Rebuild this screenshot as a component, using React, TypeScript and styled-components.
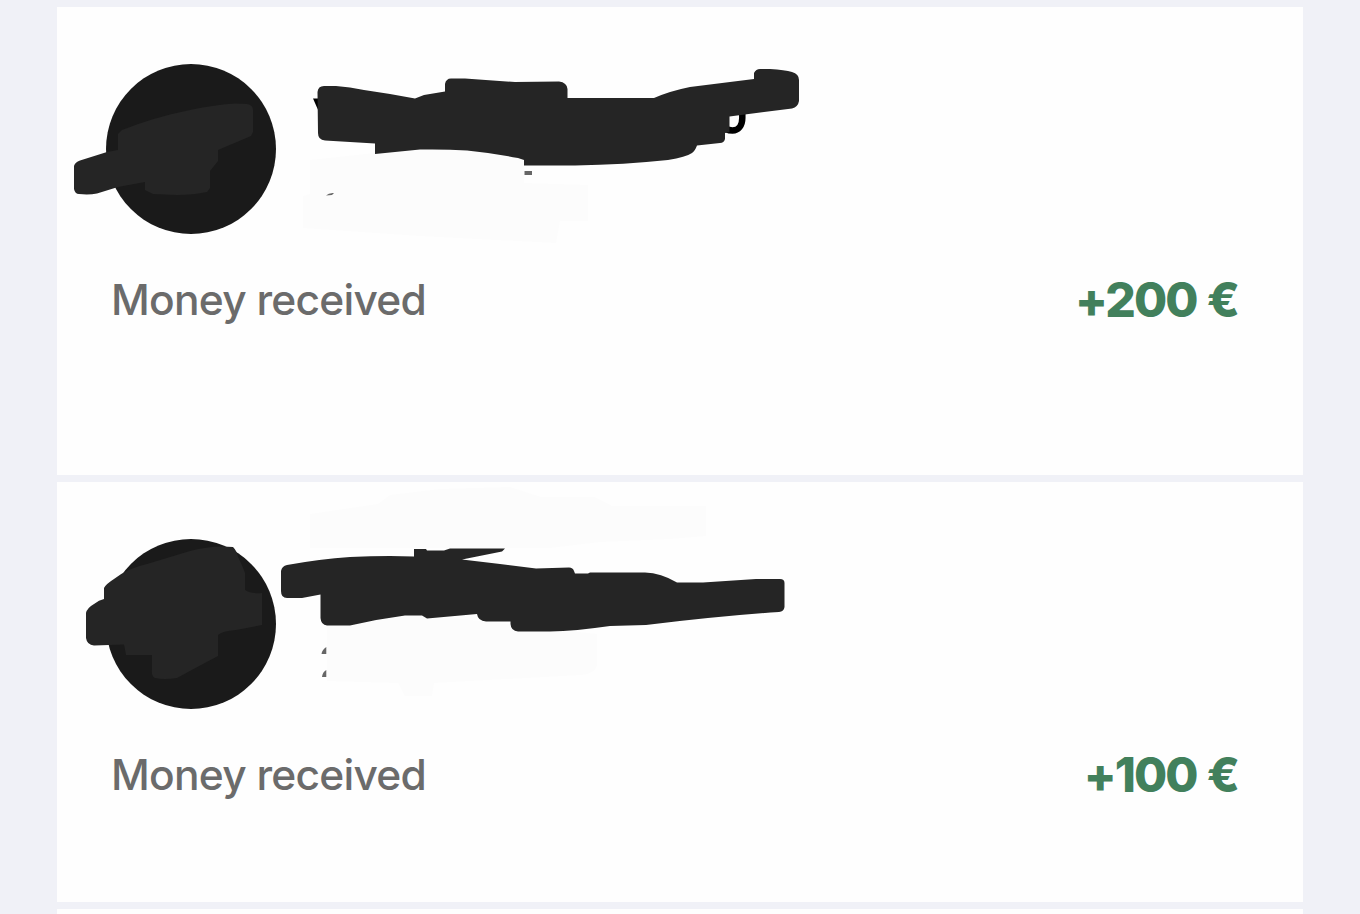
import React from "react";
import styled, { createGlobalStyle } from "styled-components";

const GlobalStyle = createGlobalStyle`
  body {
    margin: 0;
    background: #f0f1f7;
    overflow: hidden;
  }
`;

const List = styled.main`
  box-sizing: border-box;
  height: 914px;
  padding: 7px 57px 0;
  display: flex;
  flex-direction: column;
  gap: 7px;
  overflow: hidden;
  background: #f0f1f7;
  font-family: Inter, "Liberation Sans", sans-serif;
`;

const Card = styled.article<{ $height: number }>`
  position: relative;
  box-sizing: border-box;
  flex: none;
  height: ${(p) => p.$height}px;
  padding: 57px 64px 0 49px;
  background: #fefefe;
`;

const Avatar = styled.div`
  width: 170px;
  height: 170px;
  border-radius: 50%;
  background: #1a1a1a;
`;

const Row = styled.div`
  display: flex;
  justify-content: space-between;
  align-items: flex-start;
  margin-top: 36px;
  padding-left: 5px;
  line-height: 60px;
  white-space: nowrap;
`;

const Label = styled.span`
  font-size: 42.5px;
  font-weight: 500;
  letter-spacing: -0.75px;
  color: #6b6b6b;
`;

const Amount = styled.span`
  font-size: 48px;
  font-weight: 800;
  letter-spacing: -1.9px;
  word-spacing: 1.5px;
  margin-right: 1px;
  color: #42805c;
`;

const Marker = styled.svg`
  position: absolute;
  top: 0;
  left: 0;
`;

const INK = "#252525";
const PALE = "#fcfcfc";

function FirstMarks() {
  return (
    <Marker width="760" height="240" viewBox="57 7 760 240" aria-hidden="true">
      <path fill={PALE} d="M310 160L375 153L440 149L500 153L524 158V183L588 185V221H560L556 243L420 236L303 228V196L310 194Z" />
      <path fill="#000" d="M313 98.500H318L319 112Z" />
      <path fill="none" stroke="#000" strokeWidth="6.500" d="M742.300 108V118C742.300 126 738 130.500 732.500 130.500C730 130.500 728 130 726 129" />
      <path fill="#666" d="M326 195.500Q329 192.500 334 193L332 195Z" />
      <path fill="#666" d="M524.500 171H532V175H524.500Z" />
      <path
        fill={INK}
        d="M317.500 92Q318 86 324 86H336Q350 87 364 90L390 94L415 98.500L424 95L445 91.500V84Q446 78.500 451 78.500H465L515 82L559 81.500Q567 82.500 567.500 89V98H654Q670 91 690 87L754 79V73Q756 69 760 69H770Q785 70 792 72Q799 74 799 80V101Q798 107 792 108.500L729.500 116.500V132L725 133V139Q724 143 720 143L697 145.500Q695 151 692 153Q686 157 668 160Q625 164.500 575 165.500H524V160L518 158Q492 153 467 150.500Q445 149 420 149.500L375 154V143.500L325 140.500Q318 140 318 133Z"
      />
      <path
        fill={INK}
        d="M74 166Q75 162 80 160.500L107 152L118 150V134L122 130Q155 117 190 110Q216 104.500 235 103.500L247 104Q253 105 253 110V132L251 136L218 150V161L210 171V188L207 192Q193 195 177 195L153 194L145 190V182L118 187L97 193.500Q89 195 79 194Q75 194 74 189Z"
      />
    </Marker>
  );
}

function SecondMarks() {
  return (
    <Marker width="760" height="240" viewBox="57 482 760 240" aria-hidden="true">
      <path fill={PALE} d="M310 514L378 504L390 495L440 489L510 487L541 497H595L612 506H706V536L670 539L600 542L550 548H310Z" />
      <path fill={PALE} d="M327 625L420 615L490 622L597 634V665Q595 674 580 675L434 683L432 696H405L398 683L327 681Z" />
      <path fill="#666" d="M326.300 647V654H321.500Q322 650 326.300 647ZM322 677Q322.500 672 326.300 670V677Z" />
      <path
        fill={INK}
        d="M281 571Q282 566 287 565Q320 559 350 557Q385 555.500 414 556.500V549H426L427 550.500H444L450 548.500H505L502 551.500L462 559.500L500 564L536 568.500L569 567.500Q573 567.500 574 571L575 573.500H588L590 572.500H645Q661 573 677 582.500H703L756 579H780Q784.500 579 784.500 583V607Q784 611.500 779 612Q720 616 646 625L610 626Q575 631 550 631.500H518Q511 631 510.500 624V621.500H486Q478 621 477 614L427 618.500L422 615.500H405Q378 619 350 625.500H327Q321 625 320.500 618V594.500L302 598H287Q281 598 281 591Z"
      />
      <path
        fill={INK}
        d="M86 613Q87 608 94 604Q99 600 104 599V588Q106 584 114 579Q128 568 147 564L190 551Q212 545 233 547Q237 551 238 557Q243 567 245 573V590Q251 594 262 593V625L236 630Q222 631 218 635V656Q199 666 177 678Q164 680 155 678Q151 676 152 669V655H126L124 644.500L94 645.500Q87 645 86 638Z"
      />
    </Marker>
  );
}

export default function App() {
  return (
    <>
      <GlobalStyle />
      <List>
        <Card $height={468}>
          <Avatar />
          <Row>
            <Label>Money received</Label>
            <Amount>+200 €</Amount>
          </Row>
          <FirstMarks />
        </Card>
        <Card $height={420}>
          <Avatar />
          <Row>
            <Label>Money received</Label>
            <Amount>+100 €</Amount>
          </Row>
          <SecondMarks />
        </Card>
        <Card $height={60} />
      </List>
    </>
  );
}
